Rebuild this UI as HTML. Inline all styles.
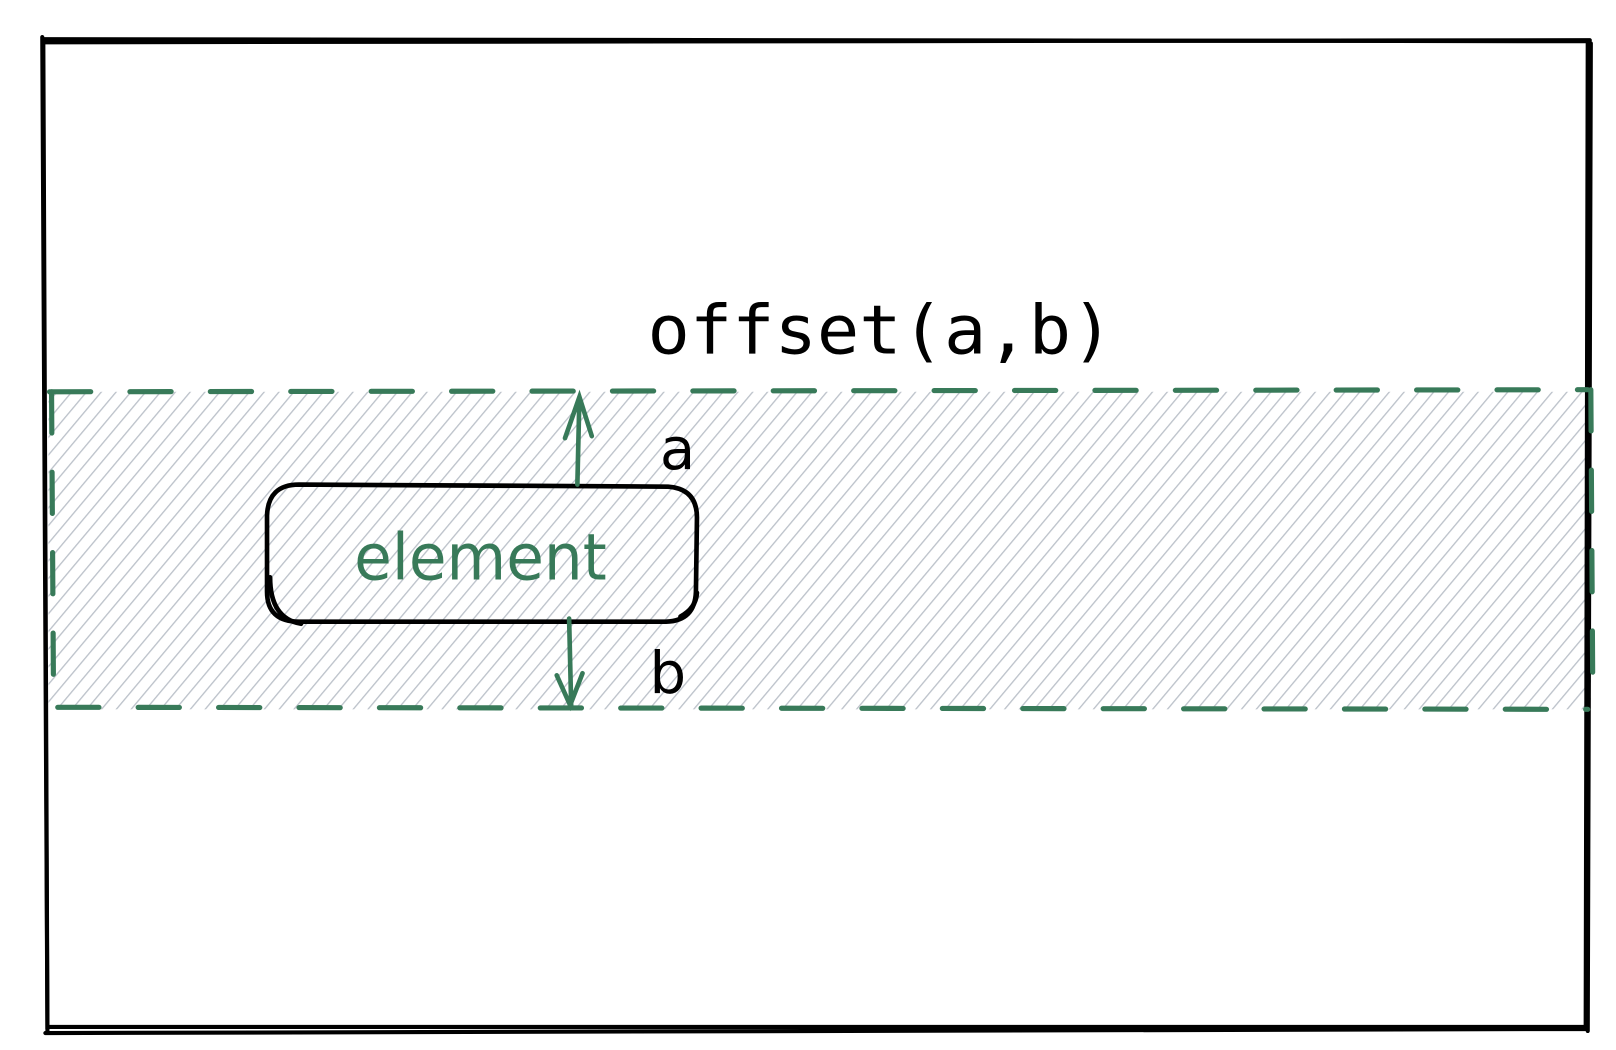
<!DOCTYPE html>
<html><head><meta charset="utf-8"><style>html,body{margin:0;padding:0;background:#fff}svg{display:block}</style></head>
<body>
<svg width="1616" height="1050" viewBox="0 0 1616 1050" xmlns="http://www.w3.org/2000/svg">
<defs>
<pattern id="h" patternUnits="userSpaceOnUse" width="11" height="11" patternTransform="rotate(40)">
<line x1="0" y1="0" x2="0" y2="11" stroke="#bcc2ca" stroke-width="2.6"/>
</pattern>
</defs>
<g transform="scale(1.031)">
<rect x="47" y="380" width="1496" height="308" fill="url(#h)"/>
<g fill="none" stroke="#000" stroke-width="4" stroke-linecap="round">
<path d="M42 38 L1540 40 L1538 996 L46 996 Z"/>
<path d="M44 41 L1542 39 M1543 42 L1540 1000 M1540 998 L44 1002 M41 36 L46 1000"/>
</g>
<g fill="none" stroke="#387a59" stroke-width="5" stroke-linecap="round" stroke-dasharray="40 38">
<path d="M48 380 L1540 378"/>
<path d="M56 686 L1540 688"/>
<path d="M50 380 L52 688"/>
<path d="M1543 378 L1545 688"/>
</g>
<g fill="none" stroke="#000" stroke-width="4.5" stroke-linecap="round">
<path d="M290 470 L648 472 Q676 474 676 502 L675 574 Q674 602 646 603 L290 603 Q259 603 259 574 L259 500 Q260 470 290 470 Z"/>
<path d="M262 560 Q262 600 292 605 M660 598 Q675 590 676 575"/>
</g>
<text x="466" y="562" font-family="'DejaVu Sans',sans-serif" font-size="62" fill="#387a59" text-anchor="middle" textLength="245" lengthAdjust="spacingAndGlyphs">element</text>
<g fill="none" stroke="#387a59" stroke-width="4.5" stroke-linecap="round">
<path d="M560 470 L562 385 M548 425 L562 385 L574 423"/>
<path d="M552 600 L554 684 M540 655 L553 684 L565 653"/>
</g>
<text x="640" y="455" font-family="'DejaVu Sans',sans-serif" font-size="56" fill="#000">a</text>
<text x="630" y="672" font-family="'DejaVu Sans',sans-serif" font-size="56" fill="#000">b</text>
<text x="628" y="343" font-family="'DejaVu Sans Mono','Liberation Mono',monospace" font-size="66" fill="#000" textLength="452" lengthAdjust="spacingAndGlyphs">offset(a,b)</text>
</g>
</svg>
</body></html>
